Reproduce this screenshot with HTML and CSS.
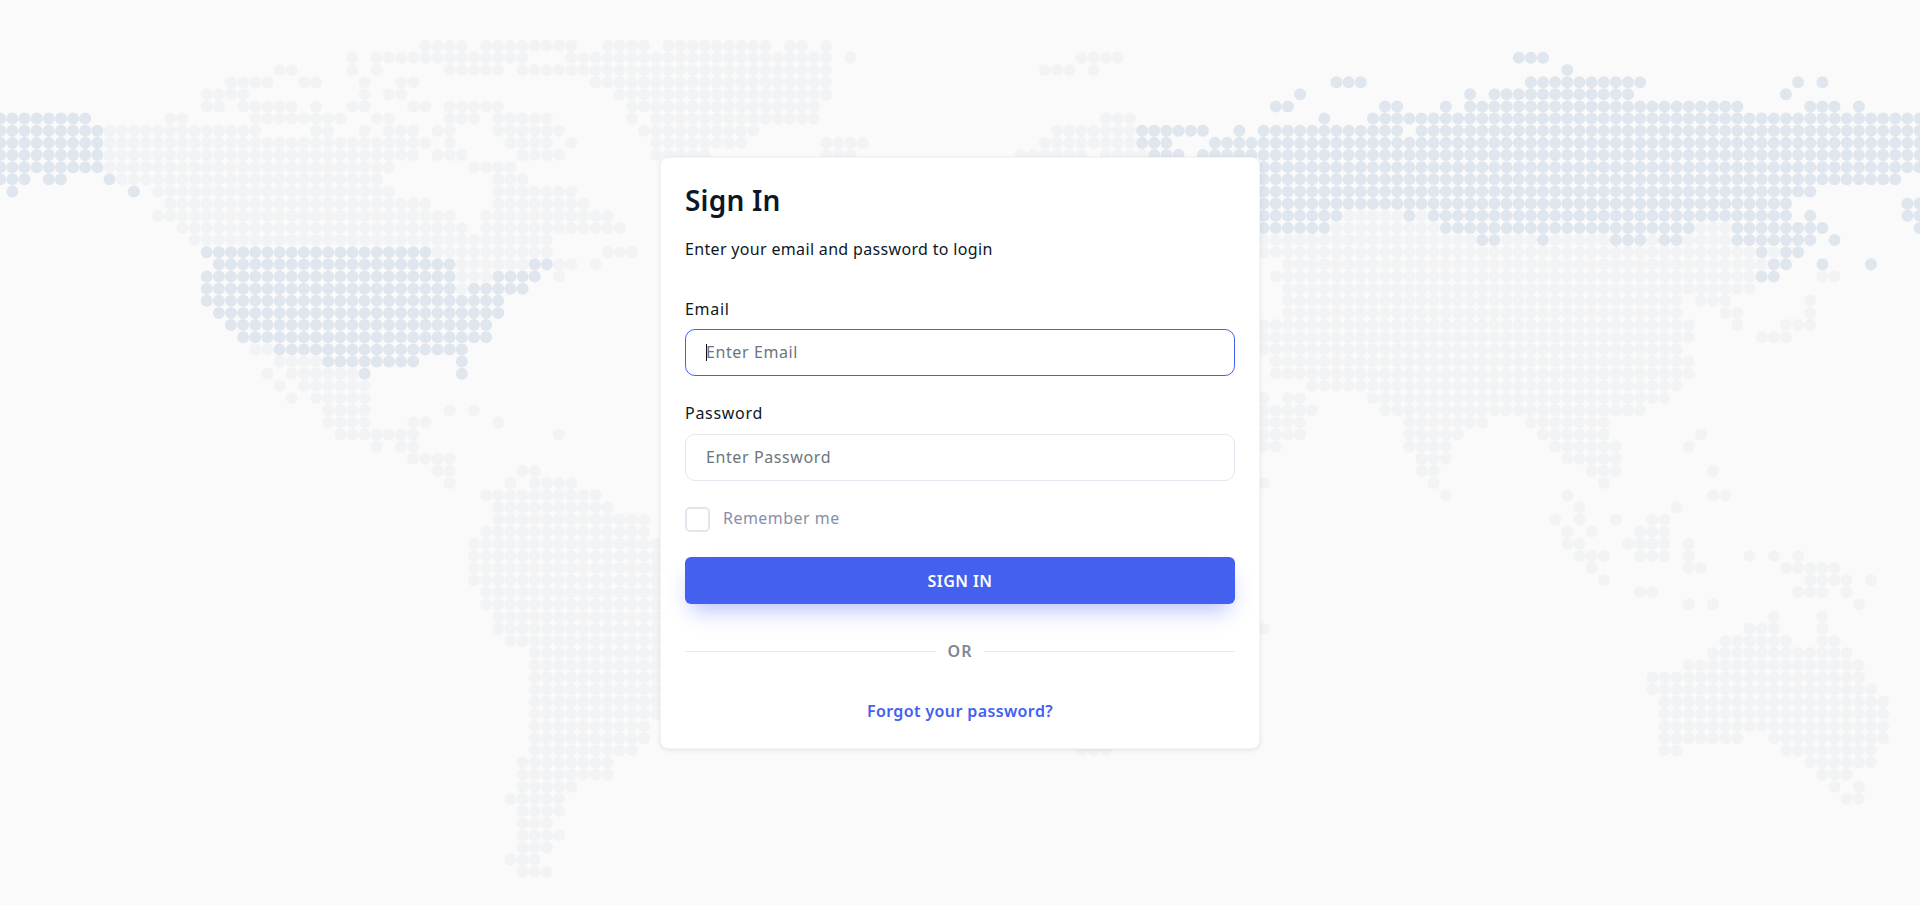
FILE: index.html
```html
<!DOCTYPE html>
<html lang="en">
<head>
<meta charset="utf-8">
<title>Sign In</title>
<link rel="stylesheet" href="styles.css">
</head>
<body>
<svg class="world-map" viewBox="0 0 1920 905" aria-hidden="true">
  <g transform="translate(0.2 45.7) scale(12.148)">
    <path class="dots dots-light" d="M35 0h3.01M40 0h7.01M50 0h3.01M55 0h8.01M65 0h1.01M68 0h.01
M29 1h.01M31 1h12.01M47 1h21.01M70 1h.01M89 1h3.01
M23 2h1.01M29 2h.01M31 2h.01M37 2h4.01M43 2h25.01M86 2h2.01M90 2h.01
M19 3h3.01M25 3h1.01M30 3h.01M33 3h1.01M49 3h19.01
M17 4h3.01M30 4h.01M32 4h1.01M51 4h17.01
M17 5h1.01M20 5h4.01M26 5h.01M29 5h1.01M34 5h1.01M37 5h4.01M52 5h15.01
M14 6h1.01M21 6h7.01M31 6h1.01M37 6h2.01M41 6h4.01M52 6h.01M54 6h13.01M91 6h2.01
M9 7h12.01M26 7h1.01M30 7h.01M32 7h2.01M36 7h1.01M41 7h5.01M53 7h9.01M87 7h6.01
M9 8h26.01M37 8h.01M42 8h3.01M47 8h.01M54 8h7.01M68 8h3.01M86 8h7.01
M9 9h25.01M36 9h2.01M43 9h3.01M54 9h4.01M68 9h2.01M84 9h5.01M91 9h3.01
M9 10h23.01M39 10h3.01
M10 11h21.01M41 11h2.01
M13 12h19.01M41 12h6.01
M14 13h21.01M41 13h7.01
M13 14h24.01M40 14h10.01M111 14h4.01M117 14h.01
M15 15h23.01M40 15h11.01M110 15h8.01M140 15h2.01
M16 16h29.01M104 16h17.01M124 16h2.01M128 16h4.01M136 16h.01M139 16h3.01
M36 17h9.01M50 17h2.01M104 17h40.01M146 17h.01
M38 18h5.01M46 18h1.01M49 18h.01M106 18h39.01
M38 19h2.01M46 19h.01M105 19h39.01M150 19h1.01
M38 20h.01M106 20h38.01
M106 21h32.01M140 21h2.01M149 21h.01
M106 22h32.01M142 22h1.01M149 22h.01
M104 23h35.01M143 23h.01M147 23h2.01
M104 24h35.01M145 24h2.01
M21 25h1.01M104 25h34.01
M23 26h3.01M105 26h34.01
M22 27h.01M24 27h5.01M105 27h34.01
M23 28h.01M25 28h5.01M108 28h30.01
M24 29h.01M26 29h4.01M104 29h.01M106 29h1.01M113 29h24.01
M27 30h3.01M37 30h.01M39 30h.01M104 30h4.01M114 30h21.01
M27 31h3.01M34 31h1.01M41 31h.01M104 31h3.01M116 31h6.01M126 31h6.01
M28 32h6.01M46 32h.01M104 32h3.01M116 32h4.01M127 32h5.01M140 32h.01
M31 33h.01M33 33h1.01M104 33h1.01M116 33h3.01M128 33h5.01M139 33h.01
M34 34h3.01M117 34h2.01M129 34h4.01
M36 35h1.01M43 35h1.01M117 35h1.01M131 35h2.01M141 35h.01
M37 36h.01M42 36h.01M44 36h3.01M104 36h.01M118 36h.01M132 36h.01
M40 37h9.01M119 37h.01M129 37h.01M141 37h1.01
M41 38h9.01M130 38h.01M138 38h.01
M41 39h12.01M128 39h.01M130 39h.01M133 39h.01M136 39h1.01
M40 40h13.01M129 40h.01M131 40h.01M135 40h2.01
M39 41h15.01M129 41h1.01M134 41h3.01M139 41h.01
M39 42h15.01M130 42h2.01M135 42h2.01M139 42h.01M144 42h.01M146 42h.01M148 42h.01
M39 43h15.01M131 43h.01M139 43h1.01M147 43h4.01
M39 44h15.01M132 44h.01M149 44h3.01M154 44h.01
M40 45h14.01M135 45h1.01M148 45h2.01M152 45h.01
M40 46h14.01M139 46h.01M141 46h.01M153 46h.01
M41 47h13.01M146 47h.01M150 47h.01
M41 48h13.01M104 48h.01M144 48h2.01M150 48h.01
M42 49h12.01M142 49h5.01M150 49h1.01
M44 50h10.01M141 50h11.01
M44 51h10.01M139 51h14.01
M44 52h10.01M136 52h17.01
M44 53h10.01M136 53h18.01
M44 54h10.01M137 54h18.01
M44 55h10.01M137 55h18.01
M44 56h9.01M137 56h18.01
M44 57h9.01M137 57h6.01M146 57h9.01
M44 58h8.01M89 58h2.01M137 58h1.01M147 58h7.01
M43 59h7.01M149 59h5.01
M43 60h7.01M150 60h2.01
M43 61h4.01M151 61h.01M153 61h.01
M42 62h4.01M152 62h1.01
M43 63h3.01
M43 64h2.01
M43 65h3.01
M43 66h2.01
M42 67h2.01
M43 68h2.01"/>
    <path class="dots dots-dark" d="M125 1h2.01
M129 2h.01
M110 3h2.01M126 3h9.01M148 3h.01M150 3h.01
M107 4h.01M121 4h.01M123 4h11.01M147 4h.01
M105 5h1.01M114 5h1.01M119 5h.01M121 5h22.01M149 5h2.01M153 5h.01
M0 6h7.01M109 6h.01M113 6h45.01
M0 7h8.01M94 7h5.01M102 7h.01M104 7h11.01M117 7h41.01
M0 8h8.01M94 8h2.01M100 8h58.01
M0 9h8.01M95 9h2.01M99 9h59.01
M0 10h8.01M104 10h54.01
M0 11h2.01M4 11h1.01M9 11h.01M104 11h52.01
M1 12h.01M11 12h.01M104 12h45.01
M104 13h43.01M157 13h1.01
M104 14h6.01M116 14h.01M118 14h29.01M149 14h.01M157 14h1.01
M104 15h5.01M119 15h20.01M143 15h7.01M158 15h.01
M122 16h1.01M127 16h.01M133 16h2.01M137 16h1.01M143 16h6.01M151 16h.01
M17 17h18.01M145 17h.01M147 17h1.01
M18 18h19.01M44 18h1.01M146 18h1.01M150 18h.01M154 18h.01
M17 19h20.01M41 19h3.01M145 19h1.01
M17 20h20.01M39 20h4.01
M17 21h24.01
M18 22h23.01
M19 23h21.01
M20 24h20.01
M23 25h15.01
M27 26h7.01M38 26h.01
M30 27h.01M38 27h.01"/>
  </g>
</svg>

<main class="page">
  <form class="card">
    <h1 class="card-title">Sign In</h1>
    <p class="card-subtitle">Enter your email and password to login</p>

    <label class="field-label" for="email">Email</label>
    <div class="input-wrap">
      <input class="text-input text-input-focus" id="email" type="email" placeholder="Enter Email">
      <span class="caret"></span>
    </div>

    <label class="field-label field-label-second" for="password">Password</label>
    <div class="input-wrap">
      <input class="text-input" id="password" type="password" placeholder="Enter Password">
    </div>

    <label class="remember">
      <span class="checkbox"></span>
      <span class="remember-text">Remember me</span>
    </label>

    <button class="submit" type="button">SIGN IN</button>

    <div class="divider"><span class="divider-text">OR</span></div>

    <a class="forgot" href="#">Forgot your password?</a>
  </form>
</main>
</body>
</html>
```

FILE: styles.css
```css
* {
  box-sizing: border-box;
}

html,
body {
  margin: 0;
  height: 100%;
}

body {
  background: #fafafa;
  color: #0e1726;
  font-family: "Noto Sans", "Lato", sans-serif;
  font-size: 16px;
  overflow: hidden;
}

.world-map {
  position: absolute;
  top: 0;
  left: 0;
  width: 1920px;
  height: 905px;
}

.dots {
  fill: none;
  stroke-width: 0.99;
  stroke-linecap: round;
  stroke-dasharray: 0 1;
}

.dots-light {
  stroke: #f1f3f5;
}

.dots-dark {
  stroke: #e0e6ee;
}

.page {
  position: relative;
  display: flex;
  align-items: center;
  justify-content: center;
  height: 905px;
}

.card {
  display: flex;
  flex-direction: column;
  width: 600px;
  height: 592px;
  margin-top: 1px;
  padding: 24px;
  border: 1px solid #f3f4f6;
  border-radius: 8px;
  background: #fff;
  box-shadow: 0 1px 4px rgba(15, 23, 42, 0.1);
}

.card-title {
  margin: 0;
  font-size: 28px;
  line-height: 36px;
  font-weight: 600;
  letter-spacing: 0.2px;
}

.card-subtitle {
  margin: 19px 0 0;
  line-height: 24px;
  letter-spacing: 0.33px;
}

.field-label {
  display: block;
  margin: 36px 0 8px;
  line-height: 24px;
  letter-spacing: 0.7px;
}

.field-label-second {
  margin: 25px 0 9px;
}

.input-wrap {
  position: relative;
  height: 47px;
}

.text-input {
  display: block;
  width: 100%;
  height: 47px;
  padding: 0 20px 2px;
  border: 1px solid #e2e8f0;
  border-radius: 10px;
  outline: none;
  background: #fff;
  color: #0e1726;
  font: inherit;
  letter-spacing: 0.6px;
}

.text-input::placeholder {
  color: #6c757d;
  opacity: 1;
}

.text-input-focus {
  border-color: #4361ee;
}

.caret {
  position: absolute;
  top: 15px;
  left: 21px;
  width: 1px;
  height: 17px;
  background: #111;
}

.remember {
  display: flex;
  align-items: center;
  gap: 13px;
  margin-top: 26px;
  color: #888ea8;
  letter-spacing: 0.47px;
}

.remember-text {
  margin-bottom: 3px;
}

.checkbox {
  width: 25px;
  height: 25px;
  border: 2px solid #e0e6ed;
  border-radius: 5px;
  background: #fff;
}

.submit {
  display: block;
  width: 100%;
  height: 47px;
  margin-top: 25px;
  border: 0;
  border-radius: 6px;
  background: #4361ee;
  color: #fff;
  font: inherit;
  font-weight: 600;
  letter-spacing: 0.43px;
  box-shadow: 0 12px 22px -6px rgba(67, 97, 238, 0.4);
}

.divider {
  display: flex;
  align-items: center;
  gap: 12px;
  margin-top: 35px;
  height: 24px;
  color: #808696;
  font-weight: 600;
  letter-spacing: 1px;
}

.divider::before,
.divider::after {
  content: "";
  flex: 1;
  height: 1px;
  background: #e9ecef;
}

.forgot {
  margin-top: 36px;
  line-height: 24px;
  color: #4361ee;
  font-weight: 600;
  text-align: center;
  text-decoration: none;
  letter-spacing: 0.38px;
}
```
